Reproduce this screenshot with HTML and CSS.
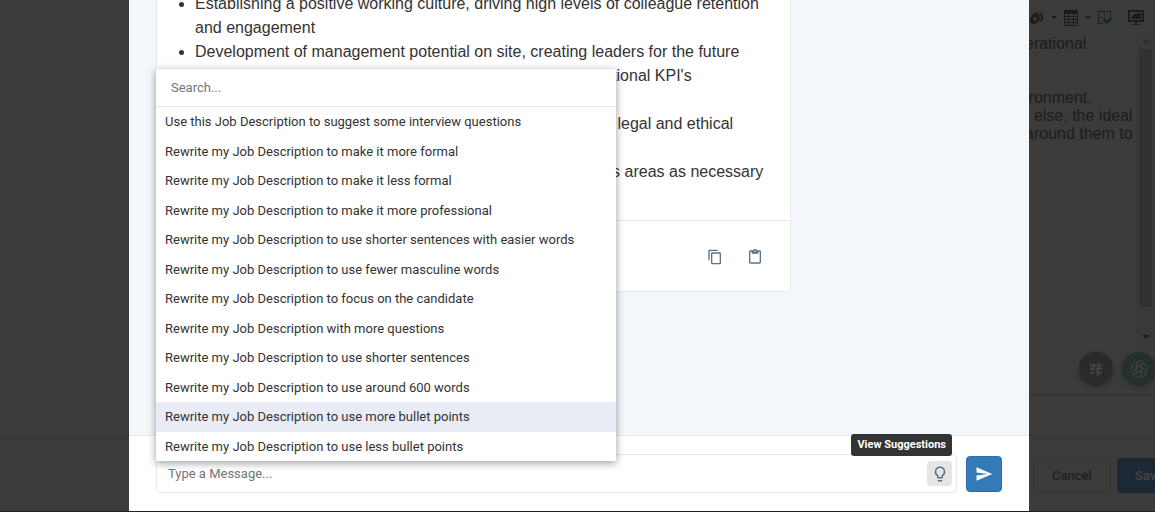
FILE: index.html
```
<!DOCTYPE html>
<html lang="en">
<head>
  <meta charset="UTF-8">
  <meta name="viewport" content="width=device-width, initial-scale=1.0">
  <title>Job Description Assistant</title>
  <link rel="stylesheet" href="styles.css">
</head>
<body>
  <div class="page">
    <div class="backdrop">
      <div class="backdrop-footer"></div>
    </div>

    <main class="dialog">
      <div class="messages">
        <div class="card">
          <ul class="card-text">
            <li>Establishing a positive working culture, driving high levels of colleague retention and engagement</li>
            <li>Development of management potential on site, creating leaders for the future</li>
            <li>Driving the site performance to achieve all of the key operational KPI's</li>
            <li>Managing all budgets and site costs</li>
            <li>Ensuring that the site is compliant with each of our relevant legal and ethical<br>standards</li>
            <li>Supporting the whole site management team across various areas as necessary</li>
          </ul>
          <div class="card-actions">
            <button class="icon-button" type="button" aria-label="Copy">
              <svg width="16" height="16" viewBox="0 0 24 24"><path d="M16 1H4a2 2 0 0 0-2 2v14h2V3h12V1zm3 4H8a2 2 0 0 0-2 2v14c0 1.100.9 2 2 2h11a2 2 0 0 0 2-2V7a2 2 0 0 0-2-2zm0 16H8V7h11v14z"/></svg>
            </button>
            <button class="icon-button" type="button" aria-label="Paste">
              <svg width="16" height="16" viewBox="0 0 24 24"><path d="M19 2h-4.200C14.400.8 13.300 0 12 0S9.600.8 9.200 2H5a2 2 0 0 0-2 2v16c0 1.100.9 2 2 2h14a2 2 0 0 0 2-2V4a2 2 0 0 0-2-2zm-7 0a1 1 0 1 1 0 2 1 1 0 0 1 0-2zm7 18H5V4h2v3h10V4h2v16z"/></svg>
            </button>
          </div>
        </div>
      </div>

      <form class="composer">
        <div class="message-box">
          <input class="message-input" type="text" placeholder="Type a Message..." aria-label="Message">
          <button class="suggest-button" type="button" aria-label="View Suggestions">
            <svg width="18" height="18" viewBox="0 0 24 24"><path d="M9 21c0 .55.45 1 1 1h4c.55 0 1-.45 1-1v-1H9v1zm3-19a7 7 0 0 0-4 12.740V17c0 .55.45 1 1 1h6c.55 0 1-.45 1-1v-2.260A7 7 0 0 0 12 2zm2.850 11.100-.85.6V16h-4v-2.300l-.85-.6A5 5 0 0 1 7 9a5 5 0 0 1 10 0 5 5 0 0 1-2.150 4.100z"/></svg>
          </button>
          <span class="tooltip" role="tooltip">View Suggestions</span>
        </div>
        <button class="send-button" type="submit" aria-label="Send">
          <svg width="18" height="18" viewBox="0 0 24 24"><path d="M2 21l21-9L2 3v7l15 2-15 2z"/></svg>
        </button>

        <div class="menu">
          <input class="menu-search" type="text" placeholder="Search..." aria-label="Search suggestions">
          <ul class="menu-list">
            <li>Use this Job Description to suggest some interview questions</li>
            <li>Rewrite my Job Description to make it more formal</li>
            <li>Rewrite my Job Description to make it less formal</li>
            <li>Rewrite my Job Description to make it more professional</li>
            <li>Rewrite my Job Description to use shorter sentences with easier words</li>
            <li>Rewrite my Job Description to use fewer masculine words</li>
            <li>Rewrite my Job Description to focus on the candidate</li>
            <li>Rewrite my Job Description with more questions</li>
            <li>Rewrite my Job Description to use shorter sentences</li>
            <li>Rewrite my Job Description to use around 600 words</li>
            <li class="active">Rewrite my Job Description to use more bullet points</li>
            <li>Rewrite my Job Description to use less bullet points</li>
          </ul>
        </div>
      </form>
    </main>

    <aside class="editor">
      <div class="toolbar">
        <svg width="14" height="14" viewBox="0 0 14 14"><path fill-rule="evenodd" d="M0 8l2-4 4-3 3 2 1 5-3 4-4 1-3-2zm3 0a2 2 0 1 0 4 0 2 2 0 0 0-4 0z"/><path d="M9 1c3 1 5 4 4 7l-2 3-1-1c2-3 1-6-1-9z"/></svg>
        <svg width="6" height="4" viewBox="0 0 6 4"><path d="M0 0h6L3 3z"/></svg>
        <svg width="14" height="16" viewBox="0 0 14 16"><path fill-rule="evenodd" d="M0 0h14v16H0zM1 4v2h3V4zm4 0v2h4V4zm5 0v2h3V4zM1 7v2h3V7zm4 0v2h4V7zm5 0v2h3V7zM1 10v2h3v-2zm4 0v2h4v-2zm5 0v2h3v-2zM1 13v2h3v-2zm4 0v2h4v-2zm5 0v2h3v-2z"/></svg>
        <svg width="6" height="4" viewBox="0 0 6 4"><path d="M0 0h6L3 3z"/></svg>
        <span class="toolbar-active">
          <svg width="14" height="14" viewBox="0 0 14 14"><path d="M0 0h13v6h-1V1H1v11h4v1H0z"/><path d="M6 2h1v1H6zm0 2h1v1H6zM2 6h1v1H2zm2 0h1v1H4zm2 0h1v1H6zm2 0h1v1H8zM5 9l2-1 2 2 4-4 1 2-5 5z"/></svg>
        </span>
        <svg width="16" height="16" viewBox="0 0 16 16"><path fill-rule="evenodd" d="M0 0h16v12H0zm2 2v8h12V2z"/><path d="M3 9c1-4 4-6 10-6v6zM7 12h2v2h3v1H4v-1h3z"/></svg>
      </div>
      <div class="editor-body">
        <div class="editor-text">
          <p>erational</p>
          <p>ironment,<br>&nbsp;&nbsp;else, the ideal<br>around them to</p>
        </div>
        <div class="scrollbar">
          <span class="arrow-up"></span>
          <span class="thumb"></span>
          <span class="arrow-down"></span>
        </div>
      </div>
      <div class="tools">
        <button class="round-button" type="button" aria-label="Settings">
          <svg width="16" height="16" viewBox="0 0 24 24"><path d="M3 16v3h7v-3zM3 5v3h10V5zm10 17h3v-3h5v-3h-5v-3h-3zM7 8v2H3v3h4v2h3V8zm14 5v-3h-9v3zm-7-3h3V8h4V5h-4V2h-3z"/></svg>
        </button>
        <button class="round-button green" type="button" aria-label="Assistant">
          <svg width="22" height="22" viewBox="0 0 24 24"><g id="knot"><path id="petal" d="M9 13.700V7.500a4 4 0 0 1 2-3.400l1-.6a4 4 0 0 1 6 3.500v1M9 10.300l5.400-3.100"/><use href="#petal" transform="rotate(60 12 12)"/><use href="#petal" transform="rotate(120 12 12)"/></g><use href="#knot" transform="rotate(180 12 12)"/></svg>
        </button>
      </div>
      <div class="editor-gap"></div>
      <div class="editor-footer">
        <button class="cancel-button" type="button">Cancel</button>
        <button class="save-button" type="button">Save</button>
      </div>
    </aside>
  </div>
</body>
</html>
```
FILE: styles.css
```
* {
  box-sizing: border-box;
}
body {
  margin: 0;
  background-color: #3b3b3b;
  font-family: Roboto, sans-serif;
  font-size: 13px;
  color: #333;
}
button, input {
  font-family: inherit;
  font-size: inherit;
  margin: 0;
}
button {
  cursor: pointer;
  padding: 0;
  border: none;
}
svg {
  display: block;
  fill: currentColor;
}
.page {
  display: grid;
  grid-template-columns: 129px minmax(0, 1fr) 126px;
  height: 100vh;
  overflow: hidden;
  border-bottom: 1px solid #202020;
}

/* dimmed page on the left */
.backdrop {
  display: flex;
  flex-direction: column;
  justify-content: flex-end;
}
.backdrop-footer {
  height: 73px;
  border-top: 1px solid #373737;
}

/* dialog */
.dialog {
  display: flex;
  flex-direction: column;
  min-height: 0;
  background-color: #fff;
}
.messages {
  flex: 1;
  min-height: 0;
  display: flex;
  flex-direction: column;
  justify-content: flex-end;
  align-items: flex-start;
  overflow: hidden;
  padding: 0 27px 143px;
  background-color: #f3f7fa;
}
.card {
  width: 75%;
  background-color: #fff;
  border: 1px solid #e5e9ee;
  border-radius: 4px;
}
.card-text {
  margin: 0;
  padding: 0 24px 36px 38px;
  font-family: "Liberation Sans", Arial, sans-serif;
  font-size: 16px;
  line-height: 24px;
}
.card-actions {
  display: flex;
  justify-content: flex-end;
  align-items: center;
  gap: 16px;
  height: 71px;
  padding-top: 2px;
  padding-right: 23px;
  border-top: 1px solid #e5e9ee;
}
.icon-button {
  display: flex;
  justify-content: center;
  align-items: center;
  width: 24px;
  height: 24px;
  background: none;
  color: #5a7184;
}

/* message form */
.composer {
  position: relative;
  display: flex;
  align-items: flex-end;
  gap: 9px;
  height: 76px;
  padding: 0 27px 18px;
  border-top: 1px solid #e5e9ee;
}
.message-box {
  position: relative;
  flex: 1;
  display: flex;
  align-items: center;
  height: 39px;
  padding: 0 4px 0 11px;
  border: 1px solid #e5e9ee;
  border-radius: 4px;
}
.message-input {
  flex: 1;
  padding: 0;
  border: none;
  outline: none;
  background: none;
}
.message-input::placeholder, .menu-search::placeholder {
  color: #757575;
}
.suggest-button {
  display: flex;
  justify-content: center;
  align-items: center;
  width: 25px;
  height: 25px;
  border-radius: 4px;
  background-color: #e5e5e5;
  color: #5a7184;
}
.tooltip {
  position: absolute;
  right: 4px;
  bottom: 36px;
  padding: 0 6px;
  border-radius: 3px;
  background-color: #333;
  color: #fff;
  font-size: 11px;
  font-weight: 700;
  line-height: 22px;
  white-space: nowrap;
}
.send-button {
  display: flex;
  justify-content: center;
  align-items: center;
  width: 36px;
  height: 36px;
  margin-bottom: 1px;
  border: 1px solid #2b6cb0;
  border-radius: 4px;
  background-color: #337ab7;
  color: #fff;
}

/* suggestions menu */
.menu {
  position: absolute;
  left: 27px;
  bottom: 50px;
  width: 460px;
  background-color: #fff;
  box-shadow: 0 2px 8px rgba(0, 0, 0, 0.4);
}
.menu-search {
  display: block;
  width: 100%;
  height: 38px;
  padding: 0 15px;
  border: none;
  border-bottom: 1px solid #e5e5e5;
  outline: none;
}
.menu-list {
  display: grid;
  grid-auto-rows: 1fr;
  height: 354px;
  margin: 0;
  padding: 0;
  list-style: none;
}
.menu-list li {
  display: flex;
  align-items: center;
  padding: 0 9px;
  cursor: pointer;
}
.menu-list .active {
  background-color: #e9ecf5;
}

/* dimmed editor on the right */
.editor {
  display: flex;
  flex-direction: column;
  overflow: hidden;
  color: #1c1c1c;
}
.toolbar {
  display: flex;
  align-items: center;
  gap: 7px;
  height: 32px;
  padding-top: 4px;
  padding-left: 1px;
  white-space: nowrap;
}
.toolbar svg {
  flex: none;
}
.toolbar-active {
  display: flex;
  justify-content: center;
  align-items: center;
  width: 24px;
  height: 24px;
  margin: 0 4px 0 -5px;
  border-radius: 3px;
  background-color: #383c3c;
}
.editor-body {
  flex: 1;
  display: flex;
  justify-content: space-between;
  min-height: 0;
}
.editor-text {
  margin-left: -4px;
  padding-top: 3px;
  font-family: "Liberation Sans", Arial, sans-serif;
  font-size: 16px;
  line-height: 18px;
  white-space: nowrap;
}
.editor-text p {
  margin: 0 0 36px;
}
.scrollbar {
  display: flex;
  flex-direction: column;
  align-items: center;
  gap: 6px;
  width: 19px;
  padding: 7px 0;
  background-color: #393939;
}
.arrow-up, .arrow-down {
  border: 4px solid transparent;
}
.arrow-up {
  border-top: none;
  border-bottom-color: #2a2a2a;
}
.arrow-down {
  border-bottom: none;
  border-top-color: #1c1c1c;
}
.thumb {
  flex: 1;
  width: 13px;
  margin-bottom: 22px;
  background-color: #313131;
}
.tools {
  display: flex;
  gap: 9px;
  height: 49px;
  padding: 6px 0 0 50px;
  border-bottom: 1px solid #303030;
}
.round-button {
  flex: none;
  display: flex;
  justify-content: center;
  align-items: center;
  width: 34px;
  height: 34px;
  border-radius: 50%;
  background-color: #292a2c;
  color: #454545;
  box-shadow: 0 2px 5px rgba(0, 0, 0, 0.2);
}
.round-button.green {
  background-color: #25302c;
}
.round-button.green svg {
  fill: none;
  stroke: currentColor;
  stroke-width: 1;
}
.editor-gap {
  height: 43px;
}
.editor-footer {
  display: flex;
  gap: 6px;
  height: 73px;
  padding: 19px 0 0 4px;
  border-top: 1px solid #373737;
}
.cancel-button, .save-button {
  flex: none;
  height: 35px;
  border-radius: 4px;
  font-weight: 500;
}
.cancel-button {
  width: 78px;
  border: 1px solid #343434;
  background-color: #3b3b3b;
  color: #202020;
}
.save-button {
  width: 64px;
  background-color: #1c2833;
  color: #464646;
}
```
